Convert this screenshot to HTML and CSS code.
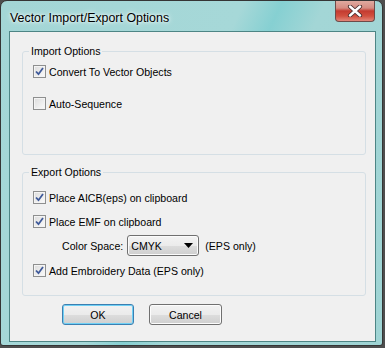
FILE: index.html
```html
<!DOCTYPE html>
<html lang="en">
<head>
    <meta charset="UTF-8">
    <title>Vector Import/Export Options</title>
    <link rel="stylesheet" href="styles.css">
</head>
<body>

<div class="window">
    <div class="titlebar">
        <span class="title">Vector Import/Export Options</span>
        <span class="close">
            <svg width="18" height="12" viewBox="0 0 18 12">
                <path d="M4 1.5 L14 10.5 M14 1.5 L4 10.5" stroke="#4a3030" stroke-width="4.2" stroke-linecap="round"/>
                <path d="M4 1.5 L14 10.5 M14 1.5 L4 10.5" stroke="#ffffff" stroke-width="2.4" stroke-linecap="round"/>
            </svg>
        </span>
    </div>

    <div class="client">
        <div class="group import">
            <div class="legend">Import Options</div>
            <div class="row first">
                <span class="check">
                    <svg width="9" height="9" viewBox="0 0 9 9"><path d="M1 4.5 L3.5 7.2 L8 1" stroke="#3f5a9a" stroke-width="1.8" fill="none"/></svg>
                </span>
                <span>Convert To Vector Objects</span>
            </div>
            <div class="row second">
                <span class="check"></span>
                <span>Auto-Sequence</span>
            </div>
        </div>

        <div class="group export">
            <div class="legend">Export Options</div>
            <div class="row aicb">
                <span class="check">
                    <svg width="9" height="9" viewBox="0 0 9 9"><path d="M1 4.5 L3.5 7.2 L8 1" stroke="#3f5a9a" stroke-width="1.8" fill="none"/></svg>
                </span>
                <span>Place AICB(eps) on clipboard</span>
            </div>
            <div class="row emf">
                <span class="check">
                    <svg width="9" height="9" viewBox="0 0 9 9"><path d="M1 4.5 L3.5 7.2 L8 1" stroke="#3f5a9a" stroke-width="1.8" fill="none"/></svg>
                </span>
                <span>Place EMF on clipboard</span>
            </div>
            <div class="row color">
                <span>Color Space:</span>
                <span class="combo">
                    <span>CMYK</span>
                    <svg width="9" height="5" viewBox="0 0 9 5"><path d="M0 0 L9 0 L4.5 5 Z" fill="#000"/></svg>
                </span>
                <span class="note">(EPS only)</span>
            </div>
            <div class="row embroidery">
                <span class="check">
                    <svg width="9" height="9" viewBox="0 0 9 9"><path d="M1 4.5 L3.5 7.2 L8 1" stroke="#3f5a9a" stroke-width="1.8" fill="none"/></svg>
                </span>
                <span>Add Embroidery Data (EPS only)</span>
            </div>
        </div>

        <div class="buttons">
            <button class="btn default">OK</button>
            <button class="btn">Cancel</button>
        </div>
    </div>
</div>

</body>
</html>
```

FILE: styles.css
```css
body {
    margin: 0;
    padding: 0;
    background-color: #4e4e4e;
    font-family: "Liberation Sans", Arial, sans-serif;
    font-size: 10.6px;
    color: #000;
}

.window {
    width: 383px;
    height: 346px;
    box-sizing: border-box;
    border: 1px solid #353535;
    border-radius: 7px 7px 3px 3px;
    background: linear-gradient(115deg, #a3d6d6 0%, #a6d8d8 45%, #86d0d2 52%, #a3d6d6 60%, #9fd4d4 100%);
    display: flex;
    flex-direction: column;
    overflow: hidden;
}

.titlebar {
    height: 30px;
    display: flex;
    justify-content: space-between;
    align-items: flex-start;
    padding-left: 9px;
}

.title {
    font-size: 12.4px;
    margin-top: 10px;
    color: #000;
    text-shadow: 0 0 6px #fff, 0 0 3px #fff;
}

.close {
    width: 40px;
    height: 21px;
    margin-right: 7px;
    box-sizing: border-box;
    border: 1px solid #6e4a48;
    border-top: none;
    border-radius: 0 0 4px 4px;
    background: linear-gradient(#e0aaa0 0%, #d58c82 35%, #c43b30 50%, #d1503f 75%, #e2867a 100%);
    display: flex;
    justify-content: center;
    align-items: center;
}

.client {
    width: 367px;
    height: 311px;
    margin-left: 8px;
    box-sizing: border-box;
    border: 1px solid #4d8585;
    background-color: #f0f0f0;
    padding-top: 19px;
}

.group {
    margin-left: 12px;
    width: 344px;
    box-sizing: border-box;
    border: 1px solid #d5dfe5;
    border-radius: 3px;
    padding-left: 10px;
}

.import {
    height: 104px;
}

.export {
    height: 124px;
    margin-top: 17px;
}

.legend {
    width: fit-content;
    margin: -7px 0 0 -4px;
    padding: 0 2px;
    line-height: 12px;
    background-color: #f0f0f0;
}

.row {
    display: flex;
    align-items: center;
    height: 13px;
    white-space: nowrap;
}

.first { margin-top: 8px; }
.second { margin-top: 19px; }
.aicb { margin-top: 13px; }
.emf { margin-top: 11px; }
.embroidery { margin-top: 8px; }

.color {
    height: 21px;
    margin-top: 7px;
    padding-left: 29px;
}

.check {
    width: 13px;
    height: 13px;
    box-sizing: border-box;
    border: 1px solid #8e8f8f;
    background: linear-gradient(135deg, #dcdcdc, #fbfbfb);
    box-shadow: inset 0 0 0 1px #f4f4f4;
    margin-right: 3px;
    display: flex;
    justify-content: center;
    align-items: center;
}

.combo {
    width: 72px;
    height: 21px;
    box-sizing: border-box;
    margin-left: 4px;
    border: 1px solid #707070;
    border-radius: 3px;
    background: linear-gradient(#f3f3f3 0%, #ebebeb 50%, #dddddd 51%, #cfcfcf 100%);
    box-shadow: inset 0 0 0 1px #fbfbfb;
    display: flex;
    justify-content: space-between;
    align-items: center;
    padding: 0 5px 0 3px;
}

.note {
    margin-left: 6px;
}

.buttons {
    display: flex;
    gap: 15px;
    margin: 8px 0 0 52px;
}

.btn {
    width: 73px;
    height: 21px;
    padding: 0;
    font-family: "Liberation Sans", Arial, sans-serif;
    font-size: 10.6px;
    color: #000;
    border: 1px solid #707070;
    border-radius: 3px;
    background: linear-gradient(#f2f2f2 0%, #ebebeb 50%, #dddddd 51%, #cfcfcf 100%);
    box-shadow: inset 0 0 0 1px #fcfcfc;
}

.default {
    width: 72px;
    border-color: #3c7fb1;
    box-shadow: inset 0 0 0 1px #6fd0f5;
}
```
